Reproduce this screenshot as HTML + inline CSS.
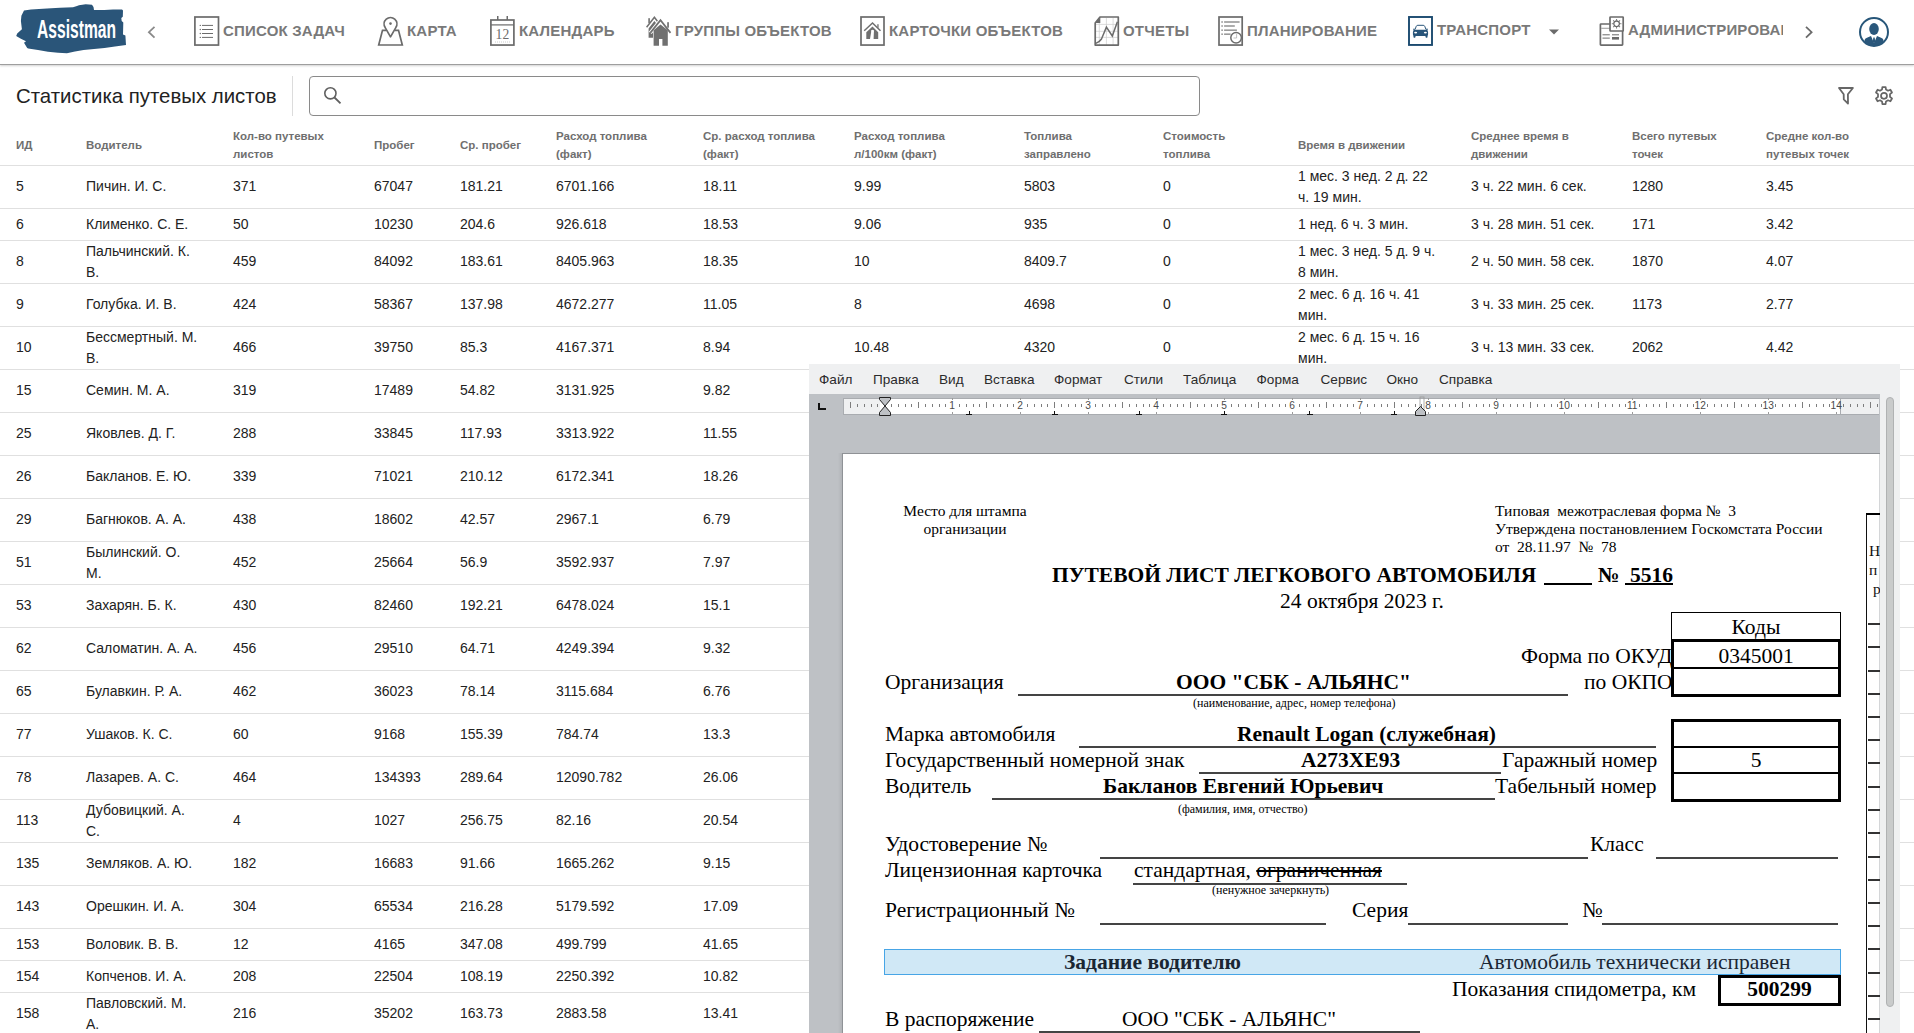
<!DOCTYPE html>
<html><head><meta charset="utf-8">
<style>
*{box-sizing:border-box;margin:0;padding:0}
html,body{width:1914px;height:1033px;overflow:hidden;background:#fff;font-family:"Liberation Sans",sans-serif;position:relative}
.abs{position:absolute}
/* header */
#hdr{position:absolute;left:0;top:0;width:1914px;height:65px;background:#fff;border-bottom:1px solid #9e9e9e;box-shadow:0 1px 2px rgba(0,0,0,.18)}
.nav{position:absolute;top:22px;font-size:15px;font-weight:700;color:#797979;letter-spacing:0.2px;white-space:nowrap;line-height:18px}
.ico{position:absolute}
/* subheader */
#title{position:absolute;left:16px;top:83.5px;font-size:20.4px;color:#222;line-height:24px;white-space:nowrap}
#sep{position:absolute;left:292px;top:76px;width:1px;height:40px;background:#dcdcdc}
#search{position:absolute;left:309px;top:76px;width:891px;height:40px;border:1px solid #8a8a8a;border-radius:4px}
/* table */
.th{position:absolute;top:127px;height:36px;display:flex;align-items:center;font-size:11.5px;font-weight:700;color:#6f6f6f;line-height:18px;white-space:nowrap}
.tr{position:absolute;left:0;width:1914px}
.td{position:absolute;top:0;display:flex;align-items:center;font-size:14px;color:#222;line-height:21px;white-space:nowrap}
.hl{position:absolute;left:0;width:1914px;height:1px;background:#e0e0e0}
/* doc window */
#win{position:absolute;left:809px;top:364px;width:1091px;height:669px;background:#eff0f1;overflow:hidden}
.mi{position:absolute;top:7px;font-size:13.6px;color:#2b2b2b;white-space:nowrap;line-height:18px}
#gray{position:absolute;left:809px;top:394px;width:1071px;height:639px;background:#bec1c5}
#rulerbox{position:absolute;left:843px;top:398px;width:1036px;height:17px;background:#fff;border:1px solid #a9acb0;border-right:none}
.rt{position:absolute;width:1px;background:#7d7d7d}
.rtk{position:absolute;width:1px;background:#9a9a9a}
.rn{position:absolute;top:398px;width:20px;text-align:center;font-size:10.2px;color:#4a4a4a;line-height:16px}
.tab{position:absolute;top:410.5px;width:6px;height:4px;}
.tab:before{content:"";position:absolute;left:2.5px;top:0;width:1.2px;height:3.5px;background:#111}
.tab:after{content:"";position:absolute;left:0;top:3px;width:6px;height:1.3px;background:#111}
#page{position:absolute;left:842px;top:453px;width:1038px;height:580px;background:#fff;border-left:1px solid #8f9296;border-top:1px solid #8f9296}
.ds{position:absolute;font-family:"Liberation Serif",serif;color:#000;white-space:nowrap;line-height:1}
.ul{position:absolute;height:2px;background:#444}
</style></head><body>

<!-- HEADER -->
<div id="hdr"></div>
<!-- logo -->
<svg class="ico" style="left:0;top:0" width="140" height="60" viewBox="0 0 140 60">
<path fill="#2a5579" d="M24 10.4 L31 9.4 L47 8.4 L60 7.8 L73 7.3 L77 6 L79 5.2 L85.7 4.2 L92 4.7 L93.5 7 L94 10 L104.5 10 L113 9.6 L122 9.4 L123 10.4 L122.8 16.7 L121.3 18 L121.7 21 L123.3 22.5 L123 34.5 L125.4 35.5 L126 45 L115 46.5 L104.5 48 L94 49 L83.6 50 L75 51.5 L66.9 53.3 L58 52.8 L48 51.7 L38 50 L28.2 48.6 L27.2 48 L24 42.8 L26 41.3 L20.9 38.7 L16.2 36 L17.2 33.4 L21.9 29.3 L20.9 20.9 L21.4 15.7 Z"/>
</svg>
<div class="abs" style="left:36.5px;top:15.3px;font-size:25px;color:#fff;white-space:nowrap;transform:scaleX(0.625);transform-origin:0 0;line-height:28px;font-weight:700">Assistman</div>
<!-- left chevron -->
<svg class="ico" style="left:145px;top:24px" width="12" height="16" viewBox="0 0 12 16"><path d="M9.5 2.8 L3.9 8.2 L9.5 13.6" fill="none" stroke="#8a8a8a" stroke-width="1.8"/></svg>

<!-- nav 1: список задач -->
<svg class="ico" style="left:193px;top:15px" width="28" height="32" viewBox="0 0 28 32">
<rect x="1.9" y="2" width="23.6" height="28.05" fill="none" stroke="#6b6b6b" stroke-width="1.7"/>
<g fill="#6b6b6b"><circle cx="7.3" cy="10.4" r=".7"/><circle cx="7.3" cy="14.5" r=".7"/><circle cx="7.3" cy="18.5" r=".7"/><circle cx="7.3" cy="22.4" r=".7"/>
<rect x="9" y="9.9" width="11" height="1"/><rect x="9" y="14" width="11" height="1"/><rect x="9" y="18" width="11" height="1"/><rect x="9" y="21.9" width="11" height="1"/></g>
</svg>
<div class="nav" style="left:223px">СПИСОК ЗАДАЧ</div>

<!-- nav 2: карта -->
<svg class="ico" style="left:377px;top:15px" width="28" height="32" viewBox="0 0 28 32">
<path d="M13.5 21.8 L8.2 12.6 A6.4 6.4 0 1 1 18.8 12.6 Z" fill="none" stroke="#6b6b6b" stroke-width="1.7" stroke-linejoin="round"/>
<circle cx="13.5" cy="8.6" r="1.3" fill="#6b6b6b"/>
<path d="M9.2 15.3 L5.5 15.3 L1.7 30 L25.3 30 L21.5 15.3 L17.8 15.3" fill="none" stroke="#6b6b6b" stroke-width="1.7"/>
</svg>
<div class="nav" style="left:407px">КАРТА</div>

<!-- nav 3: календарь -->
<svg class="ico" style="left:489px;top:15px" width="28" height="32" viewBox="0 0 28 32">
<rect x="1.9" y="5" width="23" height="25.05" fill="none" stroke="#6b6b6b" stroke-width="1.7"/>
<rect x="2" y="9.3" width="23" height="1.2" fill="#6b6b6b"/>
<rect x="8" y="1" width="1.5" height="4" fill="#6b6b6b"/><rect x="17.5" y="1" width="1.5" height="4" fill="#6b6b6b"/>
<text x="13.4" y="23.9" font-family="Liberation Serif" font-size="13.6" fill="#6b6b6b" text-anchor="middle">12</text>
<line x1="6" y1="27" x2="21" y2="27" stroke="#999" stroke-width=".5" stroke-dasharray="1 1"/>
</svg>
<div class="nav" style="left:519px">КАЛЕНДАРЬ</div>

<!-- nav 4: группы объектов -->
<svg class="ico" style="left:645px;top:15px" width="30" height="32" viewBox="0 0 30 32">
<g fill="#707070">
<polyline points="1.6,12.3 9.4,2.2 13,7" fill="none" stroke="#707070" stroke-width="1.5"/>
<rect x="3.3" y="3.2" width="1.6" height="5"/>
<path d="M3.6 22.7 L3.6 13.6 L9.4 6 L13 10.5 L8 16 L8 22.7 Z"/>
</g>
<polyline points="5.3,17.9 15.5,5.2 25.5,17.9" fill="none" stroke="#fff" stroke-width="3.6"/>
<g fill="#707070">
<rect x="22.2" y="7.2" width="1.7" height="5.5"/>
<polyline points="5.3,17.9 15.5,5.2 25.5,17.9" fill="none" stroke="#707070" stroke-width="1.7"/>
<path d="M8.6 15.2 L15.5 9.4 L22.8 15.2 L22.8 30.8 L17.4 30.8 L17.4 24 L14 24 L14 30.8 L8.6 30.8 Z"/>
</g>
</svg>
<div class="nav" style="left:675px">ГРУППЫ ОБЪЕКТОВ</div>

<!-- nav 5: карточки объектов -->
<svg class="ico" style="left:859px;top:15px" width="28" height="32" viewBox="0 0 28 32">
<rect x="2" y="2" width="23" height="28.05" fill="none" stroke="#6b6b6b" stroke-width="1.7"/>
<polyline points="5.2,15.7 13.5,8 21.5,15.7" fill="none" stroke="#707070" stroke-width="1.5"/>
<rect x="18.3" y="9.2" width="1.3" height="3.6" fill="#707070"/>
<path d="M7.3 17.2 L13.5 11.4 L19.2 17.2 L19.2 23.9 L14.6 23.9 L14.9 16.8 A1.5 1.5 0 1 0 12.2 16.8 L11 23.9 L7.3 23.9 Z" fill="#707070"/>
</svg>
<div class="nav" style="left:889px">КАРТОЧКИ ОБЪЕКТОВ</div>

<!-- nav 6: отчеты -->
<svg class="ico" style="left:1093px;top:15px" width="28" height="32" viewBox="0 0 28 32">
<g stroke="#cfcfcf" stroke-width=".7"><line x1="3" y1="9.4" x2="25" y2="9.4"/><line x1="3" y1="16.3" x2="25" y2="16.3"/><line x1="3" y1="22.4" x2="25" y2="22.4"/><line x1="6.3" y1="8" x2="6.3" y2="30"/><line x1="13.4" y1="3" x2="13.4" y2="30"/><line x1="20.1" y1="3" x2="20.1" y2="30"/></g>
<path d="M7 2 L25.3 2 L25.3 30.05 L2.2 30.05 L2.2 8 Z" fill="none" stroke="#6b6b6b" stroke-width="1.7" stroke-linejoin="round"/>
<path d="M2.5 8 L7.3 2.3 L7.3 8 Z" fill="#6b6b6b"/>
<path d="M2.8 28.4 Q6.5 27 8.5 24 L13.4 12.2 L19.3 21 L24.4 6.8" fill="none" stroke="#6b6b6b" stroke-width="1.5"/>
</svg>
<div class="nav" style="left:1123px">ОТЧЕТЫ</div>

<!-- nav 7: планирование -->
<svg class="ico" style="left:1217px;top:15px" width="28" height="32" viewBox="0 0 28 32">
<rect x="2" y="2" width="23.2" height="28.05" fill="none" stroke="#6b6b6b" stroke-width="1.7"/>
<g fill="#9a9a9a"><rect x="4.3" y="6.2" width="1.6" height="1.6"/><rect x="4.3" y="10.2" width="1.6" height="1.6"/><rect x="4.3" y="14.4" width="1.6" height="1.6"/><rect x="4.3" y="18.4" width="1.6" height="1.6"/>
<rect x="7.1" y="6.2" width="15.5" height="1.6"/><rect x="7.1" y="10.2" width="10.7" height="1.6"/><rect x="7.1" y="14.4" width="12.8" height="1.6"/><rect x="7.1" y="18.4" width="6.5" height="1.6"/></g>
<circle cx="19.1" cy="22.8" r="5.3" fill="#fff" stroke="#6b6b6b" stroke-width="1.5"/>
<path d="M19.6 18.8 L19.6 23 L16.5 23" fill="none" stroke="#aaa" stroke-width=".7"/>
</svg>
<div class="nav" style="left:1247px">ПЛАНИРОВАНИЕ</div>

<!-- nav 8: транспорт -->
<svg class="ico" style="left:1407px;top:15px" width="28" height="32" viewBox="0 0 28 32">
<rect x="2" y="2" width="23" height="27.95" fill="none" stroke="#1b4a6f" stroke-width="1.9"/>
<path d="M8 14.5 L9.3 11.2 Q9.7 10.3 10.8 10.3 L16.2 10.3 Q17.3 10.3 17.7 11.2 L19 14.5" fill="none" stroke="#285479" stroke-width="1"/>
<path fill="#285479" d="M6.2 13.8 L7.4 13.6 L7.8 14.8 L19.2 14.8 L19.6 13.6 L20.8 13.8 L20.5 15.5 Q21.2 16.5 21.1 18 L21 20.3 L20.6 20.5 L20.5 22.3 Q19.6 23.3 18.6 22.3 L18.4 21 L8.6 21 L8.4 22.3 Q7.4 23.3 6.5 22.3 L6.4 20.5 L6 20.3 L5.9 18 Q5.8 16.5 6.5 15.5 Z"/>
<ellipse cx="8.6" cy="17.6" rx="1.5" ry=".85" fill="#fff"/><ellipse cx="18.4" cy="17.6" rx="1.5" ry=".85" fill="#fff"/>
</svg>
<div class="nav" style="left:1437px;top:21px">ТРАНСПОРТ</div>
<svg class="ico" style="left:1548px;top:29px" width="12" height="7" viewBox="0 0 12 7"><path d="M1 .5 L11 .5 L6 5.5 Z" fill="#6b6b6b"/></svg>

<!-- nav 9: администрирование -->
<svg class="ico" style="left:1598px;top:15px" width="28" height="32" viewBox="0 0 28 32">
<rect x="2.4" y="9" width="22.2" height="21.05" rx=".6" fill="none" stroke="#6b6b6b" stroke-width="1.7"/>
<rect x="3" y="12.7" width="9" height="1.3" fill="#b0b0b0"/>
<rect x="12" y="2" width="13.2" height="14" rx=".5" fill="#fff" stroke="#6b6b6b" stroke-width="1.7"/>
<g transform="translate(18.6,8.8)" fill="#6b6b6b"><circle r="2.8" fill="none" stroke="#6b6b6b" stroke-width="1.3"/>
<path d="M-.5 -4.8 L.5 -4.8 L.3 -3 L-.3 -3 Z" transform="rotate(0)"/><path d="M-.5 -4.8 L.5 -4.8 L.3 -3 L-.3 -3 Z" transform="rotate(45)"/><path d="M-.5 -4.8 L.5 -4.8 L.3 -3 L-.3 -3 Z" transform="rotate(90)"/><path d="M-.5 -4.8 L.5 -4.8 L.3 -3 L-.3 -3 Z" transform="rotate(135)"/><path d="M-.5 -4.8 L.5 -4.8 L.3 -3 L-.3 -3 Z" transform="rotate(180)"/><path d="M-.5 -4.8 L.5 -4.8 L.3 -3 L-.3 -3 Z" transform="rotate(225)"/><path d="M-.5 -4.8 L.5 -4.8 L.3 -3 L-.3 -3 Z" transform="rotate(270)"/><path d="M-.5 -4.8 L.5 -4.8 L.3 -3 L-.3 -3 Z" transform="rotate(315)"/></g>
<g fill="#6b6b6b"><rect x="4.5" y="19.3" width="7.3" height="1"/><rect x="14" y="19.3" width="7" height="1"/><rect x="4.5" y="22.6" width="7.3" height="1"/><rect x="14" y="22" width="7" height="2.6"/></g>
</svg>
<div style="position:absolute;left:1628px;top:21px;width:155px;overflow:hidden"><div class="nav" style="position:static">АДМИНИСТРИРОВАНИЕ</div></div>
<!-- right chevron -->
<svg class="ico" style="left:1802px;top:24px" width="12" height="16" viewBox="0 0 12 16"><path d="M4 2.8 L9.6 8.2 L4 13.6" fill="none" stroke="#6b6b6b" stroke-width="1.8"/></svg>
<!-- avatar -->
<svg class="ico" style="left:1857px;top:15px" width="34" height="34" viewBox="0 0 34 34">
<defs><clipPath id="cc"><circle cx="17" cy="17" r="14"/></clipPath></defs>
<circle cx="17" cy="17" r="14" fill="#fff" stroke="#275679" stroke-width="2"/>
<g clip-path="url(#cc)" fill="#2a577b">
<ellipse cx="17" cy="14" rx="4.8" ry="6"/>
<path d="M7.5 33 L7.5 25 Q8 23.2 10.5 22.5 L14 21 L17 28 L20 21 L23.5 22.5 Q26 23.2 26.5 25 L26.5 33 Z"/>
<path d="M16.3 22.5 L17.7 22.5 L18.2 26.5 L17 28.5 L15.8 26.5 Z"/>
</g>
</svg>

<!-- SUBHEADER -->
<div id="title">Статистика путевых листов</div>
<div id="sep"></div>
<div id="search"></div>
<svg class="ico" style="left:321px;top:84px" width="24" height="24" viewBox="0 0 24 24">
<circle cx="9.4" cy="9.3" r="5.6" fill="none" stroke="#5f5f5f" stroke-width="1.6"/>
<line x1="13.5" y1="13.5" x2="19.5" y2="19.3" stroke="#5f5f5f" stroke-width="1.8"/>
</svg>
<!-- filter -->
<svg class="ico" style="left:1836px;top:85px" width="20" height="22" viewBox="0 0 20 22">
<path d="M3 3 L16.9 3 L11.9 9.3 L12 18.6 L7.8 14.4 L7.7 9.3 Z" fill="none" stroke="#666" stroke-width="1.8" stroke-linejoin="round"/>
</svg>
<!-- gear -->
<svg class="ico" style="left:1872px;top:84px" width="24" height="24" viewBox="0 0 24 24">
<path fill="none" stroke="#666" stroke-width="1.75" stroke-linejoin="round" d="M10.4 3 L13.6 3 L14 5.6 L16 6.7 L18.4 5.7 L20 8.5 L18 10.1 L18 12.9 L20 14.5 L18.4 17.3 L16 16.3 L14 17.4 L13.6 20 L10.4 20 L10 17.4 L8 16.3 L5.6 17.3 L4 14.5 L6 12.9 L6 10.1 L4 8.5 L5.6 5.7 L8 6.7 L10 5.6 Z"/>
<circle cx="12" cy="11.8" r="3" fill="none" stroke="#666" stroke-width="1.7"/>
</svg>

<!-- TABLE -->
<div class="th" style="left:16px">ИД</div>
<div class="th" style="left:86px">Водитель</div>
<div class="th" style="left:233px">Кол-во путевых<br>листов</div>
<div class="th" style="left:374px">Пробег</div>
<div class="th" style="left:460px">Ср. пробег</div>
<div class="th" style="left:556px">Расход топлива<br>(факт)</div>
<div class="th" style="left:703px">Ср. расход топлива<br>(факт)</div>
<div class="th" style="left:854px">Расход топлива<br>л/100км (факт)</div>
<div class="th" style="left:1024px">Топлива<br>заправлено</div>
<div class="th" style="left:1163px">Стоимость<br>топлива</div>
<div class="th" style="left:1298px">Время в движении</div>
<div class="th" style="left:1471px">Среднее время в<br>движении</div>
<div class="th" style="left:1632px">Всего путевых<br>точек</div>
<div class="th" style="left:1766px">Средне кол-во<br>путевых точек</div>
<div class="hl" style="top:165px"></div>
<div class="tr" style="top:165px;height:43px"><div class="td" style="left:16px;height:43px">5</div><div class="td" style="left:86px;height:43px">Пичин. И. С.</div><div class="td" style="left:233px;height:43px">371</div><div class="td" style="left:374px;height:43px">67047</div><div class="td" style="left:460px;height:43px">181.21</div><div class="td" style="left:556px;height:43px">6701.166</div><div class="td" style="left:703px;height:43px">18.11</div><div class="td" style="left:854px;height:43px">9.99</div><div class="td" style="left:1024px;height:43px">5803</div><div class="td" style="left:1163px;height:43px">0</div><div class="td" style="left:1298px;height:43px">1 мес. 3 нед. 2 д. 22<br>ч. 19 мин.</div><div class="td" style="left:1471px;height:43px">3 ч. 22 мин. 6 сек.</div><div class="td" style="left:1632px;height:43px">1280</div><div class="td" style="left:1766px;height:43px">3.45</div></div>
<div class="hl" style="top:208px"></div>
<div class="tr" style="top:208px;height:32px"><div class="td" style="left:16px;height:32px">6</div><div class="td" style="left:86px;height:32px">Клименко. С. Е.</div><div class="td" style="left:233px;height:32px">50</div><div class="td" style="left:374px;height:32px">10230</div><div class="td" style="left:460px;height:32px">204.6</div><div class="td" style="left:556px;height:32px">926.618</div><div class="td" style="left:703px;height:32px">18.53</div><div class="td" style="left:854px;height:32px">9.06</div><div class="td" style="left:1024px;height:32px">935</div><div class="td" style="left:1163px;height:32px">0</div><div class="td" style="left:1298px;height:32px">1 нед. 6 ч. 3 мин.</div><div class="td" style="left:1471px;height:32px">3 ч. 28 мин. 51 сек.</div><div class="td" style="left:1632px;height:32px">171</div><div class="td" style="left:1766px;height:32px">3.42</div></div>
<div class="hl" style="top:240px"></div>
<div class="tr" style="top:240px;height:43px"><div class="td" style="left:16px;height:43px">8</div><div class="td" style="left:86px;height:43px">Пальчинский. К.<br>В.</div><div class="td" style="left:233px;height:43px">459</div><div class="td" style="left:374px;height:43px">84092</div><div class="td" style="left:460px;height:43px">183.61</div><div class="td" style="left:556px;height:43px">8405.963</div><div class="td" style="left:703px;height:43px">18.35</div><div class="td" style="left:854px;height:43px">10</div><div class="td" style="left:1024px;height:43px">8409.7</div><div class="td" style="left:1163px;height:43px">0</div><div class="td" style="left:1298px;height:43px">1 мес. 3 нед. 5 д. 9 ч.<br>8 мин.</div><div class="td" style="left:1471px;height:43px">2 ч. 50 мин. 58 сек.</div><div class="td" style="left:1632px;height:43px">1870</div><div class="td" style="left:1766px;height:43px">4.07</div></div>
<div class="hl" style="top:283px"></div>
<div class="tr" style="top:283px;height:43px"><div class="td" style="left:16px;height:43px">9</div><div class="td" style="left:86px;height:43px">Голубка. И. В.</div><div class="td" style="left:233px;height:43px">424</div><div class="td" style="left:374px;height:43px">58367</div><div class="td" style="left:460px;height:43px">137.98</div><div class="td" style="left:556px;height:43px">4672.277</div><div class="td" style="left:703px;height:43px">11.05</div><div class="td" style="left:854px;height:43px">8</div><div class="td" style="left:1024px;height:43px">4698</div><div class="td" style="left:1163px;height:43px">0</div><div class="td" style="left:1298px;height:43px">2 мес. 6 д. 16 ч. 41<br>мин.</div><div class="td" style="left:1471px;height:43px">3 ч. 33 мин. 25 сек.</div><div class="td" style="left:1632px;height:43px">1173</div><div class="td" style="left:1766px;height:43px">2.77</div></div>
<div class="hl" style="top:326px"></div>
<div class="tr" style="top:326px;height:43px"><div class="td" style="left:16px;height:43px">10</div><div class="td" style="left:86px;height:43px">Бессмертный. М.<br>В.</div><div class="td" style="left:233px;height:43px">466</div><div class="td" style="left:374px;height:43px">39750</div><div class="td" style="left:460px;height:43px">85.3</div><div class="td" style="left:556px;height:43px">4167.371</div><div class="td" style="left:703px;height:43px">8.94</div><div class="td" style="left:854px;height:43px">10.48</div><div class="td" style="left:1024px;height:43px">4320</div><div class="td" style="left:1163px;height:43px">0</div><div class="td" style="left:1298px;height:43px">2 мес. 6 д. 15 ч. 16<br>мин.</div><div class="td" style="left:1471px;height:43px">3 ч. 13 мин. 33 сек.</div><div class="td" style="left:1632px;height:43px">2062</div><div class="td" style="left:1766px;height:43px">4.42</div></div>
<div class="hl" style="top:369px"></div>
<div class="tr" style="top:369px;height:43px"><div class="td" style="left:16px;height:43px">15</div><div class="td" style="left:86px;height:43px">Семин. М. А.</div><div class="td" style="left:233px;height:43px">319</div><div class="td" style="left:374px;height:43px">17489</div><div class="td" style="left:460px;height:43px">54.82</div><div class="td" style="left:556px;height:43px">3131.925</div><div class="td" style="left:703px;height:43px">9.82</div></div>
<div class="hl" style="top:412px"></div>
<div class="tr" style="top:412px;height:43px"><div class="td" style="left:16px;height:43px">25</div><div class="td" style="left:86px;height:43px">Яковлев. Д. Г.</div><div class="td" style="left:233px;height:43px">288</div><div class="td" style="left:374px;height:43px">33845</div><div class="td" style="left:460px;height:43px">117.93</div><div class="td" style="left:556px;height:43px">3313.922</div><div class="td" style="left:703px;height:43px">11.55</div></div>
<div class="hl" style="top:455px"></div>
<div class="tr" style="top:455px;height:43px"><div class="td" style="left:16px;height:43px">26</div><div class="td" style="left:86px;height:43px">Бакланов. Е. Ю.</div><div class="td" style="left:233px;height:43px">339</div><div class="td" style="left:374px;height:43px">71021</div><div class="td" style="left:460px;height:43px">210.12</div><div class="td" style="left:556px;height:43px">6172.341</div><div class="td" style="left:703px;height:43px">18.26</div></div>
<div class="hl" style="top:498px"></div>
<div class="tr" style="top:498px;height:43px"><div class="td" style="left:16px;height:43px">29</div><div class="td" style="left:86px;height:43px">Багнюков. А. А.</div><div class="td" style="left:233px;height:43px">438</div><div class="td" style="left:374px;height:43px">18602</div><div class="td" style="left:460px;height:43px">42.57</div><div class="td" style="left:556px;height:43px">2967.1</div><div class="td" style="left:703px;height:43px">6.79</div></div>
<div class="hl" style="top:541px"></div>
<div class="tr" style="top:541px;height:43px"><div class="td" style="left:16px;height:43px">51</div><div class="td" style="left:86px;height:43px">Былинский. О.<br>М.</div><div class="td" style="left:233px;height:43px">452</div><div class="td" style="left:374px;height:43px">25664</div><div class="td" style="left:460px;height:43px">56.9</div><div class="td" style="left:556px;height:43px">3592.937</div><div class="td" style="left:703px;height:43px">7.97</div></div>
<div class="hl" style="top:584px"></div>
<div class="tr" style="top:584px;height:43px"><div class="td" style="left:16px;height:43px">53</div><div class="td" style="left:86px;height:43px">Захарян. Б. К.</div><div class="td" style="left:233px;height:43px">430</div><div class="td" style="left:374px;height:43px">82460</div><div class="td" style="left:460px;height:43px">192.21</div><div class="td" style="left:556px;height:43px">6478.024</div><div class="td" style="left:703px;height:43px">15.1</div></div>
<div class="hl" style="top:627px"></div>
<div class="tr" style="top:627px;height:43px"><div class="td" style="left:16px;height:43px">62</div><div class="td" style="left:86px;height:43px">Саломатин. А. А.</div><div class="td" style="left:233px;height:43px">456</div><div class="td" style="left:374px;height:43px">29510</div><div class="td" style="left:460px;height:43px">64.71</div><div class="td" style="left:556px;height:43px">4249.394</div><div class="td" style="left:703px;height:43px">9.32</div></div>
<div class="hl" style="top:670px"></div>
<div class="tr" style="top:670px;height:43px"><div class="td" style="left:16px;height:43px">65</div><div class="td" style="left:86px;height:43px">Булавкин. Р. А.</div><div class="td" style="left:233px;height:43px">462</div><div class="td" style="left:374px;height:43px">36023</div><div class="td" style="left:460px;height:43px">78.14</div><div class="td" style="left:556px;height:43px">3115.684</div><div class="td" style="left:703px;height:43px">6.76</div></div>
<div class="hl" style="top:713px"></div>
<div class="tr" style="top:713px;height:43px"><div class="td" style="left:16px;height:43px">77</div><div class="td" style="left:86px;height:43px">Ушаков. К. С.</div><div class="td" style="left:233px;height:43px">60</div><div class="td" style="left:374px;height:43px">9168</div><div class="td" style="left:460px;height:43px">155.39</div><div class="td" style="left:556px;height:43px">784.74</div><div class="td" style="left:703px;height:43px">13.3</div></div>
<div class="hl" style="top:756px"></div>
<div class="tr" style="top:756px;height:43px"><div class="td" style="left:16px;height:43px">78</div><div class="td" style="left:86px;height:43px">Лазарев. А. С.</div><div class="td" style="left:233px;height:43px">464</div><div class="td" style="left:374px;height:43px">134393</div><div class="td" style="left:460px;height:43px">289.64</div><div class="td" style="left:556px;height:43px">12090.782</div><div class="td" style="left:703px;height:43px">26.06</div></div>
<div class="hl" style="top:799px"></div>
<div class="tr" style="top:799px;height:43px"><div class="td" style="left:16px;height:43px">113</div><div class="td" style="left:86px;height:43px">Дубовицкий. А.<br>С.</div><div class="td" style="left:233px;height:43px">4</div><div class="td" style="left:374px;height:43px">1027</div><div class="td" style="left:460px;height:43px">256.75</div><div class="td" style="left:556px;height:43px">82.16</div><div class="td" style="left:703px;height:43px">20.54</div></div>
<div class="hl" style="top:842px"></div>
<div class="tr" style="top:842px;height:43px"><div class="td" style="left:16px;height:43px">135</div><div class="td" style="left:86px;height:43px">Земляков. А. Ю.</div><div class="td" style="left:233px;height:43px">182</div><div class="td" style="left:374px;height:43px">16683</div><div class="td" style="left:460px;height:43px">91.66</div><div class="td" style="left:556px;height:43px">1665.262</div><div class="td" style="left:703px;height:43px">9.15</div></div>
<div class="hl" style="top:885px"></div>
<div class="tr" style="top:885px;height:43px"><div class="td" style="left:16px;height:43px">143</div><div class="td" style="left:86px;height:43px">Орешкин. И. А.</div><div class="td" style="left:233px;height:43px">304</div><div class="td" style="left:374px;height:43px">65534</div><div class="td" style="left:460px;height:43px">216.28</div><div class="td" style="left:556px;height:43px">5179.592</div><div class="td" style="left:703px;height:43px">17.09</div></div>
<div class="hl" style="top:928px"></div>
<div class="tr" style="top:928px;height:32px"><div class="td" style="left:16px;height:32px">153</div><div class="td" style="left:86px;height:32px">Воловик. В. В.</div><div class="td" style="left:233px;height:32px">12</div><div class="td" style="left:374px;height:32px">4165</div><div class="td" style="left:460px;height:32px">347.08</div><div class="td" style="left:556px;height:32px">499.799</div><div class="td" style="left:703px;height:32px">41.65</div></div>
<div class="hl" style="top:960px"></div>
<div class="tr" style="top:960px;height:32px"><div class="td" style="left:16px;height:32px">154</div><div class="td" style="left:86px;height:32px">Копченов. И. А.</div><div class="td" style="left:233px;height:32px">208</div><div class="td" style="left:374px;height:32px">22504</div><div class="td" style="left:460px;height:32px">108.19</div><div class="td" style="left:556px;height:32px">2250.392</div><div class="td" style="left:703px;height:32px">10.82</div></div>
<div class="hl" style="top:992px"></div>
<div class="tr" style="top:992px;height:43px"><div class="td" style="left:16px;height:43px">158</div><div class="td" style="left:86px;height:43px">Павловский. М.<br>А.</div><div class="td" style="left:233px;height:43px">216</div><div class="td" style="left:374px;height:43px">35202</div><div class="td" style="left:460px;height:43px">163.73</div><div class="td" style="left:556px;height:43px">2883.58</div><div class="td" style="left:703px;height:43px">13.41</div></div>
<div class="hl" style="top:1035px"></div>

<!-- DOC WINDOW -->
<div id="win">
  <div class="mi" style="left:10px">Файл</div>
  <div class="mi" style="left:64px">Правка</div>
  <div class="mi" style="left:130px">Вид</div>
  <div class="mi" style="left:175px">Вставка</div>
  <div class="mi" style="left:245px">Формат</div>
  <div class="mi" style="left:315px">Стили</div>
  <div class="mi" style="left:374px">Таблица</div>
  <div class="mi" style="left:447.5px">Форма</div>
  <div class="mi" style="left:511.5px">Сервис</div>
  <div class="mi" style="left:577.5px">Окно</div>
  <div class="mi" style="left:630px">Справка</div>
</div>
<div id="gray"></div>
<!-- tab L -->
<div class="abs" style="left:818px;top:403px;width:2px;height:7px;background:#111"></div>
<div class="abs" style="left:818px;top:408px;width:8px;height:2px;background:#111"></div>
<div id="rulerbox"></div>
<div class="abs" style="left:844px;top:399px;width:36px;height:15px;background:#eff0f1"></div>
<div class="abs" style="left:1840px;top:399px;width:39px;height:15px;background:#eff0f1;border-left:1px solid #a9acb0"></div>
<div class="rt" style="left:850.2px;top:402px;height:6px"></div>
<div class="rt" style="left:857.0px;top:403.5px;height:3px"></div>
<div class="rt" style="left:863.8px;top:403.5px;height:3px"></div>
<div class="rt" style="left:870.6px;top:403.5px;height:3px"></div>
<div class="rt" style="left:877.4px;top:403.5px;height:3px"></div>
<div class="rt" style="left:891.0px;top:403.5px;height:3px"></div>
<div class="rt" style="left:897.8px;top:403.5px;height:3px"></div>
<div class="rt" style="left:904.6px;top:403.5px;height:3px"></div>
<div class="rt" style="left:911.4px;top:403.5px;height:3px"></div>
<div class="rt" style="left:918.2px;top:402px;height:6px"></div>
<div class="rt" style="left:925.0px;top:403.5px;height:3px"></div>
<div class="rt" style="left:931.8px;top:403.5px;height:3px"></div>
<div class="rt" style="left:938.6px;top:403.5px;height:3px"></div>
<div class="rt" style="left:945.4px;top:403.5px;height:3px"></div>
<div class="rn" style="left:942.2px">1</div>
<div class="rtk" style="left:952.2px;top:398px;height:2px"></div><div class="rtk" style="left:952.2px;top:412px;height:2px"></div>
<div class="rt" style="left:959.0px;top:403.5px;height:3px"></div>
<div class="rt" style="left:965.8px;top:403.5px;height:3px"></div>
<div class="rt" style="left:972.6px;top:403.5px;height:3px"></div>
<div class="rt" style="left:979.4px;top:403.5px;height:3px"></div>
<div class="rt" style="left:986.2px;top:402px;height:6px"></div>
<div class="rt" style="left:993.0px;top:403.5px;height:3px"></div>
<div class="rt" style="left:999.8px;top:403.5px;height:3px"></div>
<div class="rt" style="left:1006.6px;top:403.5px;height:3px"></div>
<div class="rt" style="left:1013.4px;top:403.5px;height:3px"></div>
<div class="rn" style="left:1010.2px">2</div>
<div class="rtk" style="left:1020.2px;top:398px;height:2px"></div><div class="rtk" style="left:1020.2px;top:412px;height:2px"></div>
<div class="rt" style="left:1027.0px;top:403.5px;height:3px"></div>
<div class="rt" style="left:1033.8px;top:403.5px;height:3px"></div>
<div class="rt" style="left:1040.6px;top:403.5px;height:3px"></div>
<div class="rt" style="left:1047.4px;top:403.5px;height:3px"></div>
<div class="rt" style="left:1054.2px;top:402px;height:6px"></div>
<div class="rt" style="left:1061.0px;top:403.5px;height:3px"></div>
<div class="rt" style="left:1067.8px;top:403.5px;height:3px"></div>
<div class="rt" style="left:1074.6px;top:403.5px;height:3px"></div>
<div class="rt" style="left:1081.4px;top:403.5px;height:3px"></div>
<div class="rn" style="left:1078.2px">3</div>
<div class="rtk" style="left:1088.2px;top:398px;height:2px"></div><div class="rtk" style="left:1088.2px;top:412px;height:2px"></div>
<div class="rt" style="left:1095.0px;top:403.5px;height:3px"></div>
<div class="rt" style="left:1101.8px;top:403.5px;height:3px"></div>
<div class="rt" style="left:1108.6px;top:403.5px;height:3px"></div>
<div class="rt" style="left:1115.4px;top:403.5px;height:3px"></div>
<div class="rt" style="left:1122.2px;top:402px;height:6px"></div>
<div class="rt" style="left:1129.0px;top:403.5px;height:3px"></div>
<div class="rt" style="left:1135.8px;top:403.5px;height:3px"></div>
<div class="rt" style="left:1142.6px;top:403.5px;height:3px"></div>
<div class="rt" style="left:1149.4px;top:403.5px;height:3px"></div>
<div class="rn" style="left:1146.2px">4</div>
<div class="rtk" style="left:1156.2px;top:398px;height:2px"></div><div class="rtk" style="left:1156.2px;top:412px;height:2px"></div>
<div class="rt" style="left:1163.0px;top:403.5px;height:3px"></div>
<div class="rt" style="left:1169.8px;top:403.5px;height:3px"></div>
<div class="rt" style="left:1176.6px;top:403.5px;height:3px"></div>
<div class="rt" style="left:1183.4px;top:403.5px;height:3px"></div>
<div class="rt" style="left:1190.2px;top:402px;height:6px"></div>
<div class="rt" style="left:1197.0px;top:403.5px;height:3px"></div>
<div class="rt" style="left:1203.8px;top:403.5px;height:3px"></div>
<div class="rt" style="left:1210.6px;top:403.5px;height:3px"></div>
<div class="rt" style="left:1217.4px;top:403.5px;height:3px"></div>
<div class="rn" style="left:1214.2px">5</div>
<div class="rtk" style="left:1224.2px;top:398px;height:2px"></div><div class="rtk" style="left:1224.2px;top:412px;height:2px"></div>
<div class="rt" style="left:1231.0px;top:403.5px;height:3px"></div>
<div class="rt" style="left:1237.8px;top:403.5px;height:3px"></div>
<div class="rt" style="left:1244.6px;top:403.5px;height:3px"></div>
<div class="rt" style="left:1251.4px;top:403.5px;height:3px"></div>
<div class="rt" style="left:1258.2px;top:402px;height:6px"></div>
<div class="rt" style="left:1265.0px;top:403.5px;height:3px"></div>
<div class="rt" style="left:1271.8px;top:403.5px;height:3px"></div>
<div class="rt" style="left:1278.6px;top:403.5px;height:3px"></div>
<div class="rt" style="left:1285.4px;top:403.5px;height:3px"></div>
<div class="rn" style="left:1282.2px">6</div>
<div class="rtk" style="left:1292.2px;top:398px;height:2px"></div><div class="rtk" style="left:1292.2px;top:412px;height:2px"></div>
<div class="rt" style="left:1299.0px;top:403.5px;height:3px"></div>
<div class="rt" style="left:1305.8px;top:403.5px;height:3px"></div>
<div class="rt" style="left:1312.6px;top:403.5px;height:3px"></div>
<div class="rt" style="left:1319.4px;top:403.5px;height:3px"></div>
<div class="rt" style="left:1326.2px;top:402px;height:6px"></div>
<div class="rt" style="left:1333.0px;top:403.5px;height:3px"></div>
<div class="rt" style="left:1339.8px;top:403.5px;height:3px"></div>
<div class="rt" style="left:1346.6px;top:403.5px;height:3px"></div>
<div class="rt" style="left:1353.4px;top:403.5px;height:3px"></div>
<div class="rn" style="left:1350.2px">7</div>
<div class="rtk" style="left:1360.2px;top:398px;height:2px"></div><div class="rtk" style="left:1360.2px;top:412px;height:2px"></div>
<div class="rt" style="left:1367.0px;top:403.5px;height:3px"></div>
<div class="rt" style="left:1373.8px;top:403.5px;height:3px"></div>
<div class="rt" style="left:1380.6px;top:403.5px;height:3px"></div>
<div class="rt" style="left:1387.4px;top:403.5px;height:3px"></div>
<div class="rt" style="left:1394.2px;top:402px;height:6px"></div>
<div class="rt" style="left:1401.0px;top:403.5px;height:3px"></div>
<div class="rt" style="left:1407.8px;top:403.5px;height:3px"></div>
<div class="rt" style="left:1414.6px;top:403.5px;height:3px"></div>
<div class="rt" style="left:1421.4px;top:403.5px;height:3px"></div>
<div class="rn" style="left:1418.2px">8</div>
<div class="rtk" style="left:1428.2px;top:398px;height:2px"></div><div class="rtk" style="left:1428.2px;top:412px;height:2px"></div>
<div class="rt" style="left:1435.0px;top:403.5px;height:3px"></div>
<div class="rt" style="left:1441.8px;top:403.5px;height:3px"></div>
<div class="rt" style="left:1448.6px;top:403.5px;height:3px"></div>
<div class="rt" style="left:1455.4px;top:403.5px;height:3px"></div>
<div class="rt" style="left:1462.2px;top:402px;height:6px"></div>
<div class="rt" style="left:1469.0px;top:403.5px;height:3px"></div>
<div class="rt" style="left:1475.8px;top:403.5px;height:3px"></div>
<div class="rt" style="left:1482.6px;top:403.5px;height:3px"></div>
<div class="rt" style="left:1489.4px;top:403.5px;height:3px"></div>
<div class="rn" style="left:1486.2px">9</div>
<div class="rtk" style="left:1496.2px;top:398px;height:2px"></div><div class="rtk" style="left:1496.2px;top:412px;height:2px"></div>
<div class="rt" style="left:1503.0px;top:403.5px;height:3px"></div>
<div class="rt" style="left:1509.8px;top:403.5px;height:3px"></div>
<div class="rt" style="left:1516.6px;top:403.5px;height:3px"></div>
<div class="rt" style="left:1523.4px;top:403.5px;height:3px"></div>
<div class="rt" style="left:1530.2px;top:402px;height:6px"></div>
<div class="rt" style="left:1537.0px;top:403.5px;height:3px"></div>
<div class="rt" style="left:1543.8px;top:403.5px;height:3px"></div>
<div class="rt" style="left:1550.6px;top:403.5px;height:3px"></div>
<div class="rt" style="left:1557.4px;top:403.5px;height:3px"></div>
<div class="rn" style="left:1554.2px">10</div>
<div class="rtk" style="left:1564.2px;top:398px;height:2px"></div><div class="rtk" style="left:1564.2px;top:412px;height:2px"></div>
<div class="rt" style="left:1571.0px;top:403.5px;height:3px"></div>
<div class="rt" style="left:1577.8px;top:403.5px;height:3px"></div>
<div class="rt" style="left:1584.6px;top:403.5px;height:3px"></div>
<div class="rt" style="left:1591.4px;top:403.5px;height:3px"></div>
<div class="rt" style="left:1598.2px;top:402px;height:6px"></div>
<div class="rt" style="left:1605.0px;top:403.5px;height:3px"></div>
<div class="rt" style="left:1611.8px;top:403.5px;height:3px"></div>
<div class="rt" style="left:1618.6px;top:403.5px;height:3px"></div>
<div class="rt" style="left:1625.4px;top:403.5px;height:3px"></div>
<div class="rn" style="left:1622.2px">11</div>
<div class="rtk" style="left:1632.2px;top:398px;height:2px"></div><div class="rtk" style="left:1632.2px;top:412px;height:2px"></div>
<div class="rt" style="left:1639.0px;top:403.5px;height:3px"></div>
<div class="rt" style="left:1645.8px;top:403.5px;height:3px"></div>
<div class="rt" style="left:1652.6px;top:403.5px;height:3px"></div>
<div class="rt" style="left:1659.4px;top:403.5px;height:3px"></div>
<div class="rt" style="left:1666.2px;top:402px;height:6px"></div>
<div class="rt" style="left:1673.0px;top:403.5px;height:3px"></div>
<div class="rt" style="left:1679.8px;top:403.5px;height:3px"></div>
<div class="rt" style="left:1686.6px;top:403.5px;height:3px"></div>
<div class="rt" style="left:1693.4px;top:403.5px;height:3px"></div>
<div class="rn" style="left:1690.2px">12</div>
<div class="rtk" style="left:1700.2px;top:398px;height:2px"></div><div class="rtk" style="left:1700.2px;top:412px;height:2px"></div>
<div class="rt" style="left:1707.0px;top:403.5px;height:3px"></div>
<div class="rt" style="left:1713.8px;top:403.5px;height:3px"></div>
<div class="rt" style="left:1720.6px;top:403.5px;height:3px"></div>
<div class="rt" style="left:1727.4px;top:403.5px;height:3px"></div>
<div class="rt" style="left:1734.2px;top:402px;height:6px"></div>
<div class="rt" style="left:1741.0px;top:403.5px;height:3px"></div>
<div class="rt" style="left:1747.8px;top:403.5px;height:3px"></div>
<div class="rt" style="left:1754.6px;top:403.5px;height:3px"></div>
<div class="rt" style="left:1761.4px;top:403.5px;height:3px"></div>
<div class="rn" style="left:1758.2px">13</div>
<div class="rtk" style="left:1768.2px;top:398px;height:2px"></div><div class="rtk" style="left:1768.2px;top:412px;height:2px"></div>
<div class="rt" style="left:1775.0px;top:403.5px;height:3px"></div>
<div class="rt" style="left:1781.8px;top:403.5px;height:3px"></div>
<div class="rt" style="left:1788.6px;top:403.5px;height:3px"></div>
<div class="rt" style="left:1795.4px;top:403.5px;height:3px"></div>
<div class="rt" style="left:1802.2px;top:402px;height:6px"></div>
<div class="rt" style="left:1809.0px;top:403.5px;height:3px"></div>
<div class="rt" style="left:1815.8px;top:403.5px;height:3px"></div>
<div class="rt" style="left:1822.6px;top:403.5px;height:3px"></div>
<div class="rt" style="left:1829.4px;top:403.5px;height:3px"></div>
<div class="rn" style="left:1826.2px">14</div>
<div class="rtk" style="left:1836.2px;top:398px;height:2px"></div><div class="rtk" style="left:1836.2px;top:412px;height:2px"></div>
<div class="rt" style="left:1843.0px;top:403.5px;height:3px"></div>
<div class="rt" style="left:1849.8px;top:403.5px;height:3px"></div>
<div class="rt" style="left:1856.6px;top:403.5px;height:3px"></div>
<div class="rt" style="left:1863.4px;top:403.5px;height:3px"></div>
<div class="rt" style="left:1870.2px;top:402px;height:6px"></div>
<div class="rt" style="left:1877.0px;top:403.5px;height:3px"></div>
<div class="tab" style="left:966.1px"></div>
<div class="tab" style="left:1051.5px"></div>
<div class="tab" style="left:1136.4px"></div>
<div class="tab" style="left:1221.2px"></div>
<div class="tab" style="left:1306.6px"></div>
<div class="tab" style="left:1391.2px"></div>
<!-- indent markers -->
<svg class="ico" style="left:878px;top:396px" width="14" height="21" viewBox="0 0 14 21">
<path d="M1.5 1.5 L12.5 1.5 L12.5 3.5 L7 10 L1.5 3.5 Z" fill="#bec1c5" stroke="#222" stroke-width="1"/>
<path d="M7 10 L12.5 16.5 L12.5 19.5 L1.5 19.5 L1.5 16.5 Z" fill="#bec1c5" stroke="#222" stroke-width="1"/>
</svg>
<svg class="ico" style="left:1413px;top:396px" width="16" height="21" viewBox="0 0 16 21">
<rect x="7" y="1" width="4" height="18" fill="none" stroke="#999" stroke-width=".8"/>
<path d="M2.5 19.5 L2.5 15.5 L7.5 10.5 L12.5 15.5 L12.5 19.5 Z" fill="#bec1c5" stroke="#222" stroke-width="1"/>
</svg>
<!-- scrollbar -->
<div class="abs" style="left:1886px;top:397px;width:8px;height:610px;border-radius:4px;background:#c9cbcb;border:1px solid #b0b2b3"></div>
<div class="abs" style="left:838px;top:453px;width:4px;height:580px;background:linear-gradient(to right,rgba(0,0,0,0),rgba(0,0,0,.07))"></div>
<div id="page"></div>
<div class="abs" style="left:1879px;top:454px;width:1px;height:579px;background:#d4d6d8"></div>

<div style="position:absolute;left:0;top:0;width:1880px;height:1033px;overflow:hidden">
<!-- DOC CONTENT -->
<div class="ds" style="left:903px;top:502px;font-size:15.5px;width:124px;text-align:center;line-height:18px">Место для штампа<br>организации</div>
<div class="ds" style="left:1495px;top:502px;font-size:15.5px;line-height:18px">Типовая&nbsp; межотраслевая форма №&nbsp; 3<br>Утверждена постановлением Госкомстата России<br>от&nbsp; 28.11.97&nbsp; №&nbsp; 78</div>
<div class="ds" style="left:1052px;top:565px;font-size:21.5px;font-weight:700">ПУТЕВОЙ ЛИСТ ЛЕГКОВОГО АВТОМОБИЛЯ</div>
<div class="ul" style="left:1544px;top:583px;width:48px;height:1.5px;background:#000"></div>
<div class="ds" style="left:1598px;top:565px;font-size:21.5px;font-weight:700">№</div>
<div class="ds" style="left:1630px;top:565px;font-size:21.5px;font-weight:700">5516</div>
<div class="ul" style="left:1625px;top:583px;width:48px;height:1.5px;background:#000"></div>
<div class="ds" style="left:1280px;top:590.5px;font-size:21.5px">24 октября 2023 г.</div>

<!-- codes table 1 -->
<div class="abs" style="left:1671px;top:612px;width:170px;height:29px;border:1.5px solid #000;border-bottom:none"></div>
<div class="abs" style="left:1671px;top:639px;width:170px;height:58px;border:3px solid #000"></div>
<div class="abs" style="left:1673px;top:667px;width:166px;height:1.5px;background:#000"></div>
<div class="ds" style="left:1671px;top:617px;width:170px;text-align:center;font-size:21.5px">Коды</div>
<div class="ds" style="left:1671px;top:646px;width:170px;text-align:center;font-size:21.5px">0345001</div>
<div class="ds" style="left:1521px;top:646px;font-size:21.5px">Форма по ОКУД</div>
<div class="ds" style="left:1584px;top:672px;font-size:21.5px">по ОКПО</div>

<div class="ds" style="left:885px;top:672px;font-size:21.5px">Организация</div>
<div class="ul" style="left:1018px;top:693.5px;width:550px"></div>
<div class="ds" style="left:1176px;top:672px;font-size:21.5px;font-weight:700">ООО "СБК - АЛЬЯНС"</div>
<div class="ds" style="left:1193px;top:697px;font-size:12px">(наименование, адрес, номер телефона)</div>

<!-- codes table 2 -->
<div class="abs" style="left:1671px;top:719px;width:170px;height:83px;border:3px solid #000"></div>
<div class="abs" style="left:1673px;top:746px;width:166px;height:1.5px;background:#000"></div>
<div class="abs" style="left:1673px;top:772px;width:166px;height:1.5px;background:#000"></div>
<div class="ds" style="left:1671px;top:750px;width:170px;text-align:center;font-size:21.5px">5</div>

<div class="ds" style="left:885px;top:724px;font-size:21.5px">Марка автомобиля</div>
<div class="ul" style="left:1079px;top:746px;width:577px"></div>
<div class="ds" style="left:1237px;top:724px;font-size:21.5px;font-weight:700">Renault Logan (служебная)</div>
<div class="ds" style="left:885px;top:750px;font-size:21.5px">Государственный номерной знак</div>
<div class="ul" style="left:1199px;top:772px;width:302px"></div>
<div class="ds" style="left:1301px;top:750px;font-size:21.5px;font-weight:700">А273ХЕ93</div>
<div class="ds" style="left:1502px;top:750px;font-size:21.5px">Гаражный номер</div>
<div class="ds" style="left:885px;top:776px;font-size:21.5px">Водитель</div>
<div class="ul" style="left:992px;top:798px;width:503px"></div>
<div class="ds" style="left:1103px;top:776px;font-size:21.5px;font-weight:700">Бакланов Евгений Юрьевич</div>
<div class="ds" style="left:1495px;top:776px;font-size:21.5px">Табельный номер</div>
<div class="ds" style="left:1178px;top:803px;font-size:12px">(фамилия, имя, отчество)</div>

<div class="ds" style="left:885px;top:834px;font-size:21.5px">Удостоверение №</div>
<div class="ul" style="left:1100px;top:857px;width:488px"></div>
<div class="ds" style="left:1590px;top:834px;font-size:21.5px">Класс</div>
<div class="ul" style="left:1656px;top:857px;width:182px"></div>
<div class="ds" style="left:885px;top:860px;font-size:21.5px">Лицензионная карточка</div>
<div class="ds" style="left:1134px;top:860px;font-size:21.5px">стандартная, <span style="text-decoration:line-through">ограниченная</span></div>
<div class="ul" style="left:1133px;top:883px;width:274px"></div>
<div class="ds" style="left:1212px;top:884px;font-size:12px">(ненужное зачеркнуть)</div>
<div class="ds" style="left:885px;top:900px;font-size:21.5px">Регистрационный №</div>
<div class="ul" style="left:1100px;top:923px;width:226px"></div>
<div class="ds" style="left:1352px;top:900px;font-size:21.5px">Серия</div>
<div class="ul" style="left:1408px;top:923px;width:160px"></div>
<div class="ds" style="left:1582px;top:900px;font-size:21.5px">№</div>
<div class="ul" style="left:1602px;top:923px;width:236px"></div>

<div class="abs" style="left:884px;top:949px;width:957px;height:26px;background:#d0e8f6;border:1px solid #47a5e6"></div>
<div class="ds" style="left:1064px;top:952px;font-size:21.5px;font-weight:700;color:#1a2633">Задание водителю</div>
<div class="ds" style="left:1479px;top:952px;font-size:21.5px;color:#1a2633">Автомобиль технически исправен</div>
<div class="ds" style="left:1452px;top:979px;font-size:21.5px">Показания спидометра, км</div>
<div class="abs" style="left:1718px;top:975px;width:123px;height:31px;border:3px solid #000"></div>
<div class="ds" style="left:1718px;top:979px;width:123px;text-align:center;font-size:21.5px;font-weight:700">500299</div>
<div class="ds" style="left:885px;top:1009px;font-size:21.5px">В распоряжение</div>
<div class="ul" style="left:1039px;top:1030.5px;width:381px"></div>
<div class="ds" style="left:1122px;top:1009px;font-size:21.5px">ООО "СБК - АЛЬЯНС"</div>

<!-- right table on page -->
<div class="abs" style="left:1866px;top:513px;width:1.2px;height:520px;background:#111"></div>
<div class="abs" style="left:1866px;top:513px;width:14px;height:1.5px;background:#000"></div>
<div class="ds" style="left:1869px;top:541px;font-size:15.5px;line-height:19px;color:#111">Н<br>п<br>&nbsp;р</div>
<div style="position:absolute;left:1868px;top:623px;width:12px;height:2px;background:#333"></div>
<div style="position:absolute;left:1868px;top:646px;width:12px;height:2px;background:#333"></div>
<div style="position:absolute;left:1868px;top:670px;width:12px;height:2px;background:#333"></div>
<div style="position:absolute;left:1868px;top:693px;width:12px;height:2px;background:#333"></div>
<div style="position:absolute;left:1868px;top:716px;width:12px;height:2px;background:#333"></div>
<div style="position:absolute;left:1868px;top:739px;width:12px;height:2px;background:#333"></div>
<div style="position:absolute;left:1868px;top:762px;width:12px;height:2px;background:#333"></div>
<div style="position:absolute;left:1868px;top:786px;width:12px;height:2px;background:#333"></div>
<div style="position:absolute;left:1868px;top:809px;width:12px;height:2px;background:#333"></div>
<div style="position:absolute;left:1868px;top:832px;width:12px;height:2px;background:#333"></div>
<div style="position:absolute;left:1868px;top:856px;width:12px;height:2px;background:#333"></div>
<div style="position:absolute;left:1868px;top:879px;width:12px;height:2px;background:#333"></div>
<div style="position:absolute;left:1868px;top:902px;width:12px;height:2px;background:#333"></div>
<div style="position:absolute;left:1868px;top:925px;width:12px;height:2px;background:#333"></div>
<div style="position:absolute;left:1868px;top:948px;width:12px;height:2px;background:#333"></div>
<div style="position:absolute;left:1868px;top:972px;width:12px;height:2px;background:#333"></div>
<div style="position:absolute;left:1868px;top:995px;width:12px;height:2px;background:#333"></div>
<div style="position:absolute;left:1868px;top:1018px;width:12px;height:2px;background:#333"></div>
</div>
</body></html>
